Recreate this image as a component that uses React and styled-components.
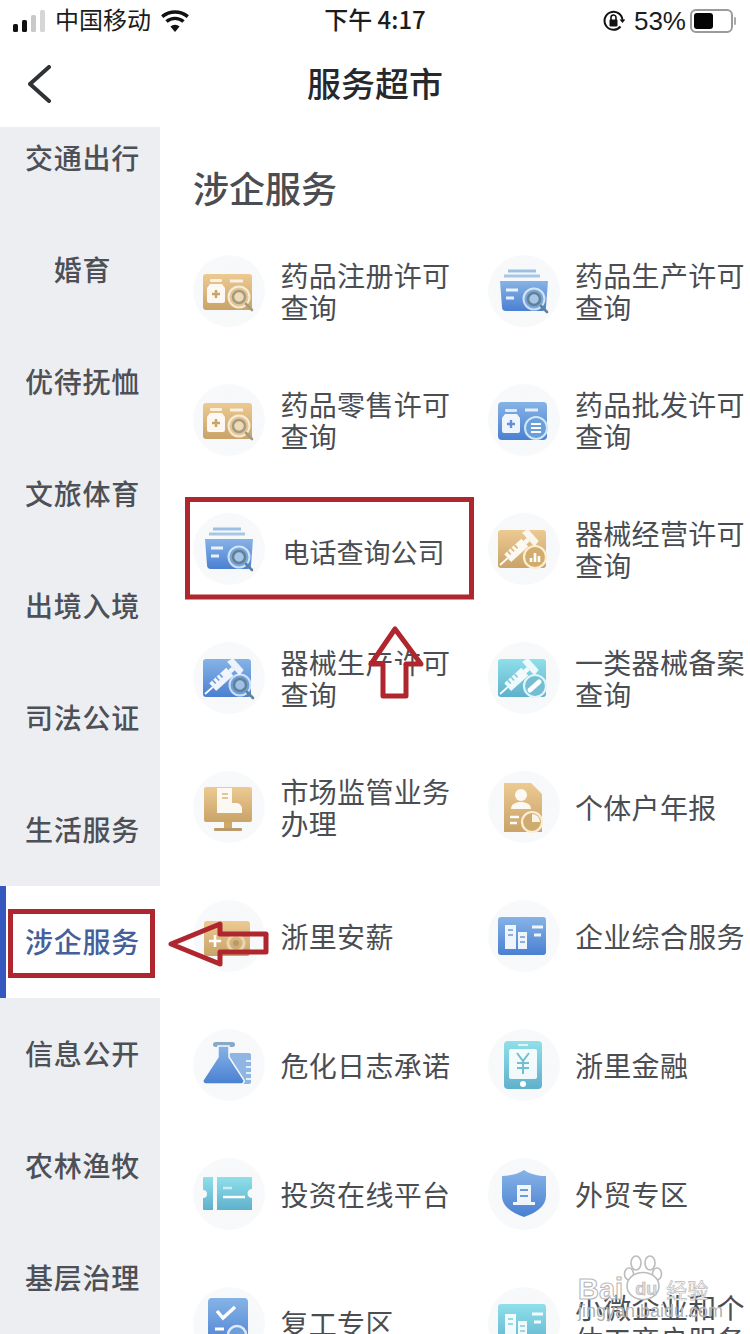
import React from "react";
import styled, { createGlobalStyle } from "styled-components";

const Global = createGlobalStyle`
  html, body { margin: 0; padding: 0; background: #fff; }
  body { font-family: "Noto Sans CJK SC", "Noto Sans", sans-serif; }
`;

const Screen = styled.div`
  position: relative;
  width: 750px;
  height: 1334px;
  overflow: hidden;
  background: #fff;
  color: #45494f;
`;

const StatusBar = styled.div`
  height: 42px;
  display: grid;
  grid-template-columns: 1fr auto 1fr;
  align-items: center;
  padding: 0 13px;
  color: #1c1c1c;
`;
const StatusLeft = styled.div`
  display: flex;
  align-items: center;
  gap: 10px;
`;
const StatusRight = styled.div`
  display: flex;
  align-items: center;
  justify-content: flex-end;
  gap: 9px;
`;
const Carrier = styled.span`
  font-size: 24px;
  line-height: 32px;
  padding-bottom: 4px;
`;
const Clock = styled.span`
  font-size: 24px;
  line-height: 32px;
  font-weight: 500;
  padding-bottom: 4px;
`;
const Percent = styled.span`
  font-family: "Liberation Sans", sans-serif;
  font-size: 26px;
  line-height: 32px;
  margin-right: -5px;
`;

const NavBar = styled.div`
  position: relative;
  height: 85px;
  box-sizing: border-box;
  padding-bottom: 4px;
  display: flex;
  align-items: center;
  justify-content: center;
`;
const NavTitle = styled.h1`
  margin: 0;
  font-size: 34px;
  line-height: 48px;
  font-weight: 500;
  color: #26282b;
`;
const BackIcon = styled.svg`
  position: absolute;
  left: 25px;
  top: 23px;
`;

const Body = styled.div`
  display: flex;
  align-items: flex-start;
`;
const Sidebar = styled.nav`
  flex: 0 0 160px;
  height: 1207px;
  overflow: hidden;
  background: #eceef2;
`;
const SideList = styled.div`
  margin-top: -25px;
`;
const SideItem = styled.div`
  height: 112px;
  display: flex;
  align-items: center;
  justify-content: center;
  box-sizing: border-box;
  font-size: 28px;
  font-weight: 500;
  letter-spacing: 0.8px;
  color: ${p => (p.$active ? "#44609a" : "#4d5056")};
  background: ${p => (p.$active ? "#fff" : "transparent")};
  border-left: 6px solid ${p => (p.$active ? "#3458bd" : "transparent")};
  padding: 0 1px 2px 0;
`;

const Content = styled.main`
  flex: 1;
  padding: 36px 0 0 33px;
`;
const SectionTitle = styled.h2`
  margin: 0 0 15px;
  font-size: 36px;
  line-height: 48px;
  font-weight: 500;
  color: #4a4d52;
`;
const Grid = styled.div`
  display: grid;
  grid-template-columns: 294.5px 1fr;
  grid-auto-rows: 129.1px;
`;
const Cell = styled.div`
  display: flex;
  align-items: center;
  gap: 15.5px;
`;
const Badge = styled.div`
  flex: 0 0 72px;
  width: 72px;
  height: 72px;
  border-radius: 50%;
  background: radial-gradient(circle, #f6f7f8 0%, #f8f9fa 72%, #fdfdfd 100%);
  svg { display: block; }
`;
const Label = styled.div`
  width: 172px;
  font-size: ${p => (p.$boxed ? "27px" : "28px")};
  letter-spacing: ${p => (p.$boxed ? "0" : "0.3px")};
  line-height: 32px;
  color: #4a4d52;
  padding-top: ${p => (p.$boxed ? "6px" : "0")};
  margin-left: ${p => (p.$boxed ? "2px" : "0")};
`;

const Overlay = styled.svg`
  position: absolute;
  left: 0;
  top: 0;
  pointer-events: none;
`;

const Watermark = styled.div`
  position: absolute;
  left: 578px;
  top: 1254px;
  width: 140px;
  height: 70px;
  color: #fff;
`;
const MarkBrand = styled.div`
  position: relative;
  display: flex;
  align-items: center;
  margin-top: 23px;
  height: 24px;
  white-space: nowrap;
  font-family: "Liberation Sans", sans-serif;
  font-size: 29px;
  font-weight: 700;
  color: #fff;
  -webkit-text-stroke: 1.1px #b9b9b9;
`;
const MarkDu = styled.span`
  display: inline-block;
  margin-left: 8px;
  width: 30px;
  text-align: center;
  font-size: 18px;
  -webkit-text-stroke: 0.5px #aaa;
  color: #ddd;
`;
const MarkCn = styled.span`
  font-family: "Noto Sans CJK SC", sans-serif;
  font-size: 21px;
  font-weight: 400;
  margin-left: 5px;
  -webkit-text-stroke: 0.7px #b9b9b9;
`;
const MarkUrl = styled.div`
  font-family: "Liberation Sans", sans-serif;
  font-size: 18px;
  line-height: 20px;
  color: rgba(150, 150, 150, 0.75);
  text-shadow: 0 0 1px #fff;
  white-space: nowrap;
`;
const Paw = styled.svg`
  position: absolute;
  left: 45px;
  top: 1px;
`;

const Defs = () => (
  <svg width="0" height="0" style={{ position: "absolute" }}>
    <defs>
      <linearGradient id="gold" x1="0" y1="0" x2="0" y2="1">
        <stop offset="0" stopColor="#ecca92" />
        <stop offset="1" stopColor="#c9a368" />
      </linearGradient>
      <linearGradient id="blue" x1="0" y1="0" x2="0" y2="1">
        <stop offset="0" stopColor="#86b3e6" />
        <stop offset="1" stopColor="#4a80d2" />
      </linearGradient>
      <linearGradient id="cyan" x1="0" y1="0" x2="0" y2="1">
        <stop offset="0" stopColor="#8fe0ea" />
        <stop offset="1" stopColor="#5fb0cb" />
      </linearGradient>
    </defs>
  </svg>
);

const Glass = ({ c, x = 46, y = 42, h = "#a59a82" }) => (
  <g>
    <circle cx={x} cy={y} r="10.5" fill={c} stroke="#fff" strokeOpacity=".7" strokeWidth="2" />
    <circle cx={x} cy={y} r="6" fill="#fff" fillOpacity=".35" stroke={h} strokeWidth="2.5" />
    <path d={`M${x + 7} ${y + 7}l6 6`} stroke={h} strokeWidth="2.6" strokeLinecap="round" />
  </g>
);
const Bottle = ({ x = 15, y = 24, c = "#c9a368" }) => (
  <g transform={`translate(${x} ${y})`}>
    <rect x="2" y="0" width="12" height="3" rx="1" fill="#fff" fillOpacity=".75" />
    <path d="M2 5h12l3 4v13a2 2 0 0 1-2 2H1a2 2 0 0 1-2-2V9z" fill="#fff" fillOpacity=".9" />
    <path d="M8 11v8M4 15h8" stroke={c} strokeWidth="2.4" />
  </g>
);
const Syringe = ({ c }) => (
  <g transform="translate(12 52) rotate(-42) scale(1.15)">
    <path d="M0 0h9" stroke="#fff" strokeWidth="1.6" />
    <rect x="9" y="-4.5" width="20" height="9" fill="#fff" fillOpacity=".9" />
    <path d="M13 -4.5v4M17 -4.5v4M21 -4.5v4" stroke={c} strokeWidth="1.4" />
    <path d="M29 -2h4v4h-4z" fill="#fff" fillOpacity=".9" />
    <path d="M33 -8l6 1v14l-6 1z" fill="#fff" fillOpacity=".85" />
  </g>
);

const glyphs = {
  medGold: (
    <>
      <rect x="10" y="19" width="49" height="36" rx="3" fill="url(#gold)" />
      <Bottle />
      <path d="M37 26h13" stroke="#fff" strokeOpacity=".75" strokeWidth="3" />
      <Glass c="#e6c68f" />
    </>
  ),
  folder: (
    <>
      <path d="M20 16h28" stroke="#9cc0e2" strokeWidth="3" />
      <path d="M16 21h36" stroke="#a8c7e6" strokeWidth="3" />
      <path d="M12 26h48l-2 26a4 4 0 0 1-4 4H18a4 4 0 0 1-4-4z" fill="url(#blue)" />
      <path d="M18 35h12M18 43h8" stroke="#fff" strokeOpacity=".85" strokeWidth="3" />
      <Glass c="#79a7da" x={46} y={44} h="#5f8296" />
    </>
  ),
  medBlue: (
    <>
      <rect x="10" y="18" width="49" height="38" rx="4" fill="url(#blue)" />
      <Bottle x={15} y={25} c="#5f90d8" />
      <path d="M37 26h13" stroke="#fff" strokeOpacity=".8" strokeWidth="3" />
      <circle cx="48" cy="44" r="11" fill="#6aa0da" stroke="#cfe7f5" strokeWidth="2" />
      <path d="M43 40h10M43 44h10M43 48h10" stroke="#fff" strokeWidth="2" />
    </>
  ),
  syrGold: (
    <>
      <rect x="10" y="17" width="48" height="38" rx="3" fill="url(#gold)" />
      <Syringe c="#d8b579" />
      <circle cx="47" cy="44" r="11" fill="#d2ac6c" stroke="#fbeed2" strokeWidth="2.2" />
      <path d="M43 49v-4M47 49v-9M51 49v-6" stroke="#fff" strokeWidth="2.6" />
    </>
  ),
  syrBlue: (
    <>
      <rect x="10" y="17" width="48" height="38" rx="3" fill="url(#blue)" />
      <Syringe c="#6b9bdc" />
      <Glass c="#6d9fdc" x={47} y={43} h="#5f8296" />
    </>
  ),
  syrCyan: (
    <>
      <rect x="10" y="17" width="48" height="38" rx="3" fill="url(#cyan)" />
      <Syringe c="#7fcbdc" />
      <circle cx="47" cy="44" r="11" fill="#74bdd2" stroke="#dff5f8" strokeWidth="2.2" />
      <path d="M42 48l9-8" stroke="#fff" strokeWidth="5" strokeLinecap="round" />
    </>
  ),
  screen: (
    <>
      <rect x="11" y="16" width="48" height="35" rx="2" fill="url(#gold)" />
      <path d="M24 17h15v15h5a6 6 0 0 1 5 7v3H24z" fill="#fff" fillOpacity=".9" />
      <path d="M29 23h6M29 27h6" stroke="#d8b579" strokeWidth="1.6" />
      <rect x="31" y="51" width="8" height="6" fill="#d2a866" />
      <rect x="21" y="57" width="28" height="3" rx="1" fill="#b99a6c" />
    </>
  ),
  report: (
    <>
      <path d="M16 12h27l11 11v38H16z" fill="url(#gold)" />
      <circle cx="33" cy="24" r="6" fill="#fff" fillOpacity=".9" />
      <path d="M23 38c0-5 5-7 10-7s10 2 10 7z" fill="#fff" fillOpacity=".9" />
      <path d="M22 46h9M22 52h7" stroke="#fff" strokeWidth="2.6" />
      <circle cx="44" cy="51" r="10" fill="#d0ab6f" stroke="#fbeed2" strokeWidth="2.2" />
      <path d="M44 51v-8a8 8 0 0 1 8 8z" fill="#fff" fillOpacity=".85" />
    </>
  ),
  salary: (
    <>
      <rect x="11" y="21" width="46" height="35" rx="3" fill="url(#gold)" />
      <path d="M16 41h12M22 35v12" stroke="#fff" strokeWidth="2.6" />
      <circle cx="43" cy="43" r="8" fill="none" stroke="#e8d6b0" strokeWidth="3" />
      <circle cx="43" cy="43" r="3" fill="#b89a6a" />
    </>
  ),
  office: (
    <>
      <rect x="10" y="17" width="48" height="38" rx="3" fill="url(#blue)" />
      <rect x="17" y="25" width="11" height="24" fill="#fff" fillOpacity=".9" />
      <rect x="30" y="32" width="9" height="17" fill="#fff" fillOpacity=".9" />
      <path d="M20 30h5M20 35h5M32 37h5M32 42h5" stroke="#6b9bdc" strokeWidth="1.6" />
      <path d="M44 27h11M46 35h7" stroke="#fff" strokeOpacity=".9" strokeWidth="3" />
    </>
  ),
  flask: (
    <>
      <rect x="36" y="24" width="22" height="31" rx="2" fill="#8fb5e3" />
      <path d="M53 32h5M53 38h5M53 44h5M53 50h5" stroke="#fff" strokeWidth="1.6" />
      <rect x="20" y="13" width="22" height="5" rx="2.5" fill="#8aa9c6" />
      <path d="M25 17h11v11l15 23a3 3 0 0 1-3 4H13a3 3 0 0 1-3-4l15-23z" fill="url(#blue)" stroke="#f7f8f9" strokeWidth="1.5" />
    </>
  ),
  phone: (
    <>
      <rect x="16" y="12" width="38" height="48" rx="4" fill="url(#cyan)" />
      <path d="M30 16h10" stroke="#fff" strokeOpacity=".7" strokeWidth="2" />
      <rect x="21" y="20" width="28" height="30" rx="2" fill="#fff" fillOpacity=".9" />
      <path d="M29 24l6 8 6-8M35 32v13M29 34h12M29 39h12" fill="none" stroke="#73bfcf" strokeWidth="2" />
      <circle cx="35" cy="55" r="3" fill="#fff" />
    </>
  ),
  ticket: (
    <>
      <path d="M11 19h9v33h-9a1 1 0 0 1-1-1V40a4 4 0 0 0 0-8V20a1 1 0 0 1 1-1z" fill="url(#cyan)" />
      <path d="M24 19h35v12a4 4 0 0 0 0 9v12H24z" fill="url(#cyan)" />
      <path d="M30 30h9" stroke="#fff" strokeOpacity=".6" strokeWidth="2.5" />
      <path d="M30 39h22" stroke="#fff" strokeWidth="2.5" />
    </>
  ),
  shield: (
    <>
      <path d="M36 12c6 4 14 6 22 6v20c0 10-10 17-22 21-12-4-22-11-22-21V18c8 0 16-2 22-6z" fill="url(#blue)" />
      <rect x="29" y="27" width="14" height="17" fill="#fff" fillOpacity=".9" />
      <rect x="25" y="44" width="22" height="3" fill="#fff" fillOpacity=".9" />
      <path d="M32 32h8M32 38h8" stroke="#6b9bdc" strokeWidth="2" />
    </>
  ),
  check: (
    <>
      <rect x="15" y="11" width="40" height="50" rx="4" fill="url(#blue)" />
      <path d="M24 24l6 7 12-11" fill="none" stroke="#fff" strokeWidth="3.4" />
      <path d="M22 42h9M22 50h7" stroke="#fff" strokeWidth="3" />
      <circle cx="44" cy="48" r="9" fill="#6d9fdc" stroke="#fff" strokeOpacity=".8" strokeWidth="2.5" />
    </>
  ),
  officeCyan: (
    <>
      <rect x="10" y="17" width="48" height="44" rx="3" fill="url(#cyan)" />
      <rect x="17" y="27" width="11" height="24" fill="#fff" fillOpacity=".9" />
      <rect x="30" y="34" width="9" height="17" fill="#fff" fillOpacity=".9" />
      <path d="M20 32h5M20 37h5M32 39h5M32 44h5" stroke="#7fcbdc" strokeWidth="1.6" />
      <path d="M44 27h11M46 35h7" stroke="#fff" strokeOpacity=".9" strokeWidth="3" />
    </>
  ),
};

const ServiceIcon = ({ name }) => (
  <Badge>
    <svg width="72" height="72" viewBox="0 0 72 72">{glyphs[name]}</svg>
  </Badge>
);

const sideItems = ["交通出行", "婚育", "优待抚恤", "文旅体育", "出境入境", "司法公证", "生活服务", "涉企服务", "信息公开", "农林渔牧", "基层治理"];
const services = [
  ["药品注册许可查询", "medGold"],
  ["药品生产许可查询", "folder"],
  ["药品零售许可查询", "medGold"],
  ["药品批发许可查询", "medBlue"],
  ["电话查询公司", "folder", true],
  ["器械经营许可查询", "syrGold"],
  ["器械生产许可查询", "syrBlue"],
  ["一类器械备案查询", "syrCyan"],
  ["市场监管业务办理", "screen"],
  ["个体户年报", "report"],
  ["浙里安薪", "salary"],
  ["企业综合服务", "office"],
  ["危化日志承诺", "flask"],
  ["浙里金融", "phone"],
  ["投资在线平台", "ticket"],
  ["外贸专区", "shield"],
  ["复工专区", "check"],
  ["小微企业和个体工商户服务", "officeCyan"],
];

export default function App() {
  return (
    <Screen>
      <Global />
      <Defs />
      <StatusBar>
        <StatusLeft>
          <svg width="32" height="24" viewBox="0 0 32 24">
            <rect x="0" y="15" width="5" height="8" rx="1.5" fill="#111" />
            <rect x="9" y="11" width="5" height="12" rx="1.5" fill="#111" />
            <rect x="18" y="6" width="5" height="17" rx="1.5" fill="#c9c9c9" />
            <rect x="27" y="1" width="5" height="22" rx="1.5" fill="#d6d6d6" />
          </svg>
          <Carrier>中国移动</Carrier>
          <svg width="28" height="22" viewBox="0 0 28 22">
            <path d="M14 22l-4.6-5.6a7 7 0 0 1 9.2 0z" fill="#111" />
            <path d="M5.5 11.5a13 13 0 0 1 17 0" fill="none" stroke="#111" strokeWidth="3.4" />
            <path d="M1.2 6.6a20 20 0 0 1 25.6 0" fill="none" stroke="#111" strokeWidth="3.4" />
          </svg>
        </StatusLeft>
        <Clock>下午 4:17</Clock>
        <StatusRight>
          <svg width="22" height="22" viewBox="0 0 22 22">
            <path d="M17.5 16.5A9 9 0 1 1 19.5 10" fill="none" stroke="#111" strokeWidth="2" />
            <path d="M16.5 9.5h6l-3 3.5z" fill="#111" />
            <rect x="6.5" y="9.5" width="8" height="7" rx="1" fill="#111" />
            <path d="M8 10V7.5a2.5 2.5 0 0 1 5 0V10" fill="none" stroke="#111" strokeWidth="1.6" />
          </svg>
          <Percent>53%</Percent>
          <svg width="47" height="24" viewBox="0 0 47 24">
            <rect x="1" y="1" width="41" height="22" rx="5" fill="#fff" stroke="#9b9b9b" strokeWidth="2" />
            <rect x="4" y="4" width="19" height="16" rx="3" fill="#050505" />
            <path d="M45 9v6" stroke="#aaa" strokeWidth="2" strokeLinecap="round" />
          </svg>
        </StatusRight>
      </StatusBar>

      <NavBar>
        <BackIcon width="28" height="38" viewBox="0 0 28 38">
          <path d="M24 2L5 19l19 17" fill="none" stroke="#2f3236" strokeWidth="4" strokeLinecap="round" strokeLinejoin="round" />
        </BackIcon>
        <NavTitle>服务超市</NavTitle>
      </NavBar>

      <Body>
        <Sidebar>
          <SideList>
            {sideItems.map(t => (
              <SideItem key={t} $active={t === "涉企服务"}>{t}</SideItem>
            ))}
          </SideList>
        </Sidebar>
        <Content>
          <SectionTitle>涉企服务</SectionTitle>
          <Grid>
            {services.map(([text, icon, boxed]) => (
              <Cell key={text}>
                <ServiceIcon name={icon} />
                <Label $boxed={boxed}>{text}</Label>
              </Cell>
            ))}
          </Grid>
        </Content>
      </Body>

      <Overlay width="750" height="1334" viewBox="0 0 750 1334">
        <g fill="none" stroke="#b0262f" strokeWidth="5">
          <rect x="187.5" y="499.5" width="284" height="97.5" />
          <rect x="10.5" y="911.5" width="142" height="64" />
        </g>
        <rect x="384" y="665" width="21" height="30" fill="#fff" />
        <path d="M395 629L371 664H383V696H406V664H421Z" fill="none" stroke="#b0262f" strokeWidth="5" strokeLinejoin="round" />
        <path d="M171 944L220 924V934H266V952H220V964Z" fill="none" stroke="#b0262f" strokeWidth="5" strokeLinejoin="round" />
      </Overlay>

      <Watermark>
        <Paw width="40" height="46" viewBox="0 0 40 46">
          <g fill="#fff" stroke="#bdbdbd" strokeWidth="1.6">
            <ellipse cx="6" cy="19" rx="4.5" ry="6" />
            <ellipse cx="13" cy="8" rx="5" ry="7" />
            <ellipse cx="27" cy="8" rx="5" ry="7" />
            <ellipse cx="34" cy="19" rx="4.5" ry="6" />
            <ellipse cx="20" cy="31" rx="16" ry="13.5" />
          </g>
        </Paw>
        <MarkBrand>
          Bai<MarkDu>du</MarkDu><MarkCn>经验</MarkCn>
        </MarkBrand>
        <MarkUrl>jingyan.baidu.com</MarkUrl>
      </Watermark>
    </Screen>
  );
}
